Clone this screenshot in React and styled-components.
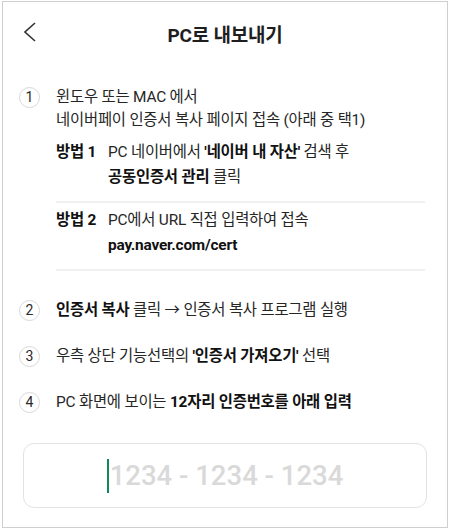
import React from "react";
import styled, { createGlobalStyle } from "styled-components";

const Global = createGlobalStyle`
  html, body { margin: 0; padding: 0; background: #fff; }
  body { font-family: "Roboto", "Noto Sans CJK KR", sans-serif; color: #222; }
  * { box-sizing: border-box; }
`;

const Frame = styled.div`
  margin: 1px 2px 0 2px;
  width: 446px;
  height: 527px;
  border: 1px solid #cfcfcf;
  display: flex;
  flex-direction: column;
  background: #fff;
  overflow: hidden;
`;

const Header = styled.header`
  height: 62px;
  flex: none;
  display: flex;
  align-items: center;
  justify-content: center;
  position: relative;
`;

const BackButton = styled.button`
  position: absolute;
  left: 21px;
  top: 19px;
  width: 14px;
  height: 22px;
  border: 0;
  padding: 0;
  background: none;
  display: flex;
`;

const Title = styled.h1`
  margin: 0;
  font-size: 19px;
  font-weight: 700;
  color: #1e1e1e;
  letter-spacing: -0.2px;
`;

const Steps = styled.ol`
  list-style: none;
  margin: 0;
  padding: 21.5px 20px 0 16px;
  display: flex;
  flex-direction: column;
`;

const Step = styled.li`
  display: flex;
  align-items: flex-start;
  gap: 16px;
  padding-bottom: ${(p) => p.$gap || 0}px;
`;

const Num = styled.span`
  flex: none;
  width: 21px;
  height: 21px;
  margin-top: 1px;
  border-radius: 50%;
  border: 1.5px solid #d8d8d8;
  display: flex;
  align-items: center;
  justify-content: center;
  font-size: 14px;
  color: #2a2a2a;
`;

const Body = styled.div`
  flex: 1;
  font-size: 15.4px;
  line-height: 23px;
  color: #262626;
  letter-spacing: -0.2px;
`;

const Strong = styled.b`
  font-weight: 700;
  color: #111;
`;

const Methods = styled.div`
  margin-top: 8px;
  margin-right: 2px;
  display: flex;
  flex-direction: column;
  line-height: 25px;
`;

const Method = styled.div`
  display: flex;
  gap: 14px;
  padding: 0 0 11px;
  border-bottom: 2px solid #f1f1f1;
  & + & {
    padding-top: 5.5px;
  }
`;

const MethodLabel = styled.span`
  flex: none;
  width: 38px;
  font-weight: 700;
  white-space: nowrap;
  color: #111;
`;

const InputBox = styled.div`
  margin: 29.5px 20px 0 20px;
  height: 65px;
  flex: none;
  border: 1px solid #e3e3e3;
  border-radius: 11px;
  display: flex;
  align-items: center;
  justify-content: center;
`;

const Field = styled.div`
  display: flex;
  align-items: center;
  font-size: 27.5px;
  font-weight: 500;
  color: #d9d9d9;
`;

const Caret = styled.span`
  width: 2px;
  height: 34px;
  background: #13895b;
  margin-right: 1px;
`;

export default function App() {
  return (
    <>
      <Global />
      <Frame>
        <Header>
          <BackButton aria-label="뒤로">
            <svg width="14" height="22" viewBox="0 0 14 22">
              <path d="M11 2 L1 11 L11 20" fill="none" stroke="#333" strokeWidth="1.6" />
            </svg>
          </BackButton>
          <Title>PC로 내보내기</Title>
        </Header>
        <Steps>
          <Step $gap={27.5}>
            <Num>1</Num>
            <Body>
              윈도우 또는 MAC 에서
              <br />
              네이버페이 인증서 복사 페이지 접속 (아래 중 택1)
              <Methods>
                <Method>
                  <MethodLabel>방법 1</MethodLabel>
                  <div>
                    PC 네이버에서 <Strong>'네이버 내 자산'</Strong> 검색 후
                    <br />
                    <Strong>공동인증서 관리</Strong> 클릭
                  </div>
                </Method>
                <Method>
                  <MethodLabel>방법 2</MethodLabel>
                  <div>
                    PC에서 URL 직접 입력하여 접속
                    <br />
                    <Strong>pay.naver.com/cert</Strong>
                  </div>
                </Method>
              </Methods>
            </Body>
          </Step>
          <Step $gap={23}>
            <Num>2</Num>
            <Body>
              <Strong>인증서 복사</Strong> 클릭 → 인증서 복사 프로그램 실행
            </Body>
          </Step>
          <Step $gap={23}>
            <Num>3</Num>
            <Body>
              우측 상단 기능선택의 <Strong>'인증서 가져오기'</Strong> 선택
            </Body>
          </Step>
          <Step>
            <Num>4</Num>
            <Body>
              PC 화면에 보이는 <Strong>12자리 인증번호를 아래 입력</Strong>
            </Body>
          </Step>
        </Steps>
        <InputBox>
          <Field>
            <Caret />
            1234 - 1234 - 1234
          </Field>
        </InputBox>
      </Frame>
    </>
  );
}
